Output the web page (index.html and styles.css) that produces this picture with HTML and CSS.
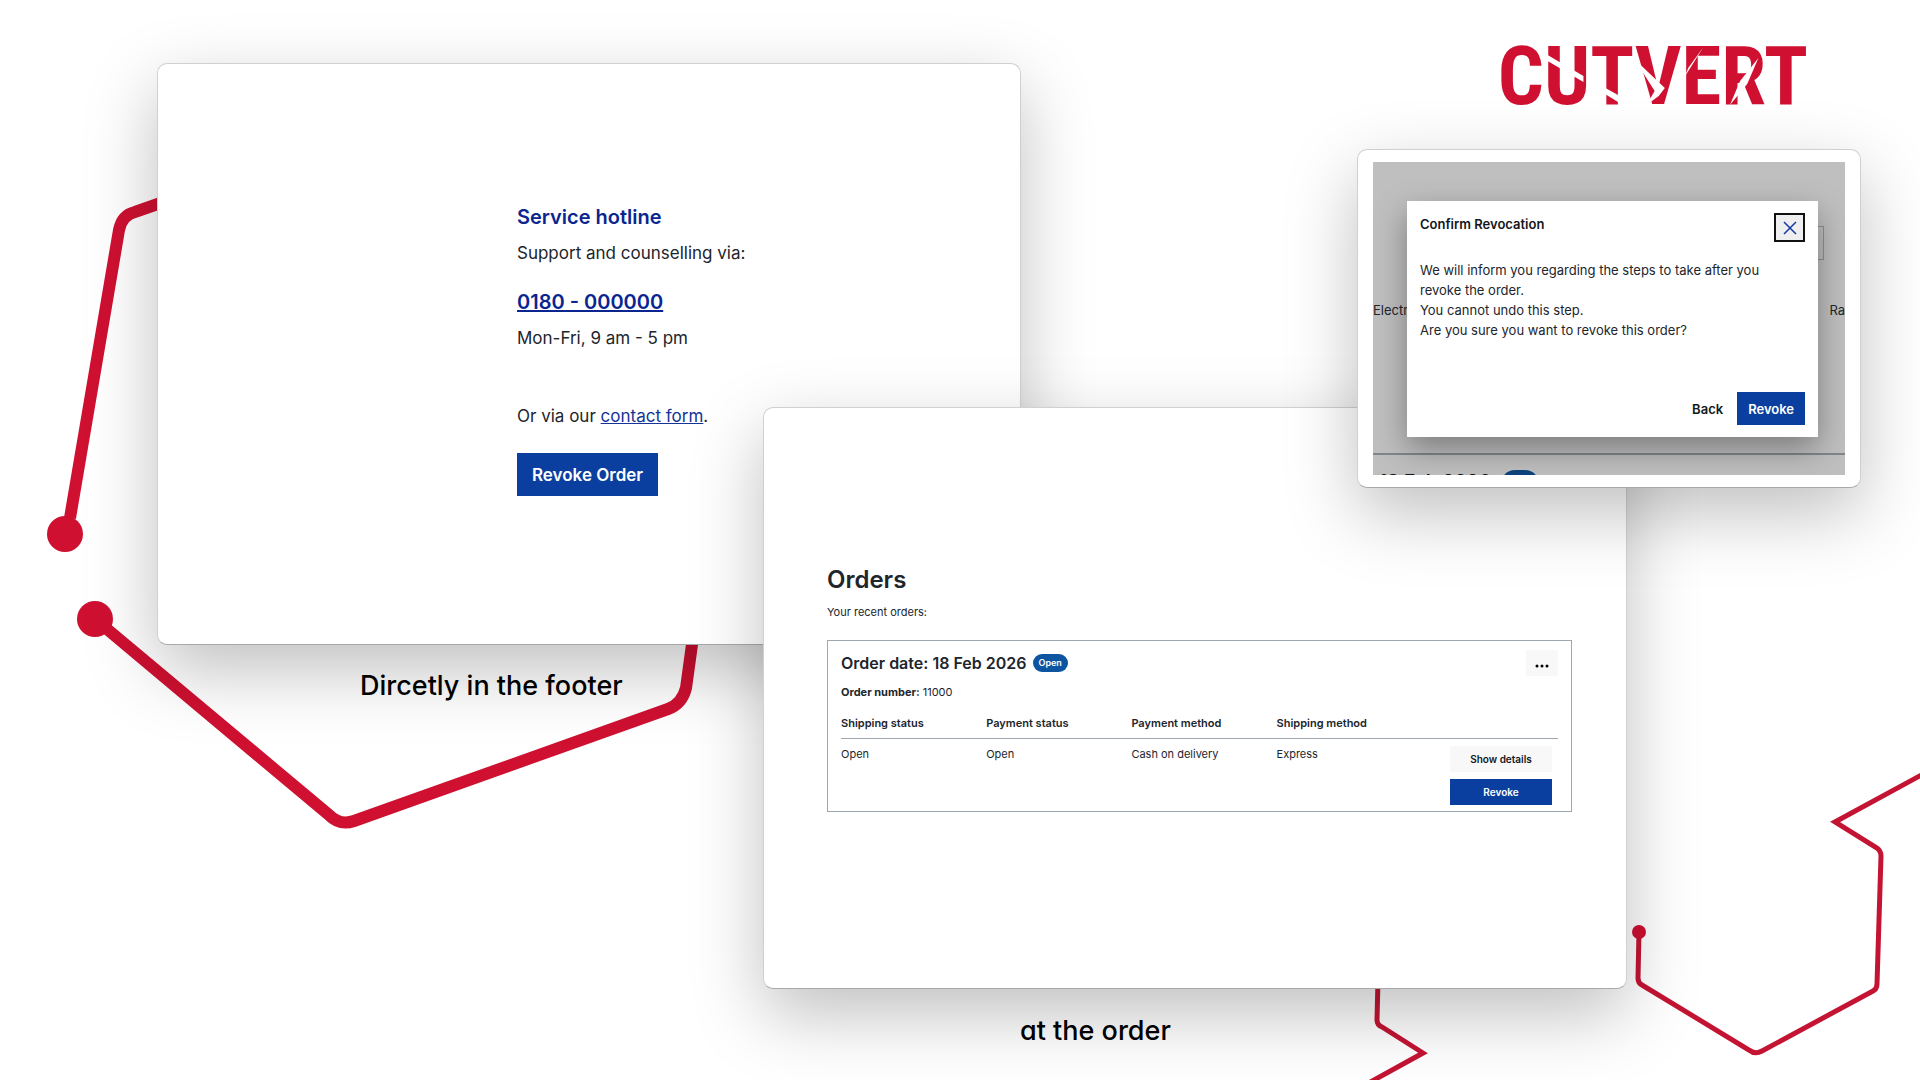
FILE: index.html
```html
<!DOCTYPE html>
<html lang="en">

<head>
    <meta charset="UTF-8">
    <meta name="viewport" content="width=device-width, initial-scale=1.0">
    <title>Cutvert - Revoke Order</title>
    <link rel="stylesheet" href="styles.css">
</head>

<body>
    <main class="stage">
        <svg class="lines" viewBox="0 0 1920 1080" preserveAspectRatio="xMinYMin slice" aria-hidden="true">
            <g class="line-thick">
                <path d="M70 518 L119 230 Q122 215 135 212 L175 198" />
                <path d="M95 619 L329 815 Q340 826 354 821 L668 709 Q682 704 686 688 L694 630" />
            </g>
            <g class="line-thin">
                <path d="M1639 932 L1638 978 Q1638 983 1642 985 L1749 1050 Q1755 1055 1762 1051 L1873 991 Q1877 989 1877 984 L1881 856 Q1881 851 1877 848 L1835 822 L1925 773" />
                <path d="M1378 980 L1377 1020 Q1377 1025 1382 1027 L1423 1053 L1365 1085" />
            </g>
            <g class="dots">
                <circle cx="65" cy="534" r="18" />
                <circle cx="95" cy="619" r="18" />
                <circle cx="1639" cy="932" r="7" />
            </g>
        </svg>

        <div class="logo">
            <span>CUTVERT</span>
            <svg class="logo-cuts" viewBox="0 0 305 68" preserveAspectRatio="none" aria-hidden="true">
                <path d="M42 8 L84 33 V39 L42 14Z" />
                <path d="M102 43 L118 52 V59 L102 49Z" />
                <path d="M134 16 L164 45 L158 53 L146 62 L154 48Z" />
                <path d="M202 4 L184 33 L187 25Z" />
                <path d="M256 15 L245 41 L228 62 L238 38Z" />
            </svg>
        </div>

        <section class="panel footer-panel">
            <h2>Service hotline</h2>
            <p>Support and counselling via:</p>
            <a class="phone" href="tel:0180000000">0180 - 000000</a>
            <p>Mon-Fri, 9 am - 5 pm</p>
            <p class="contact">Or via our <a href="#contact">contact form</a>.</p>
            <button type="button" class="btn btn-large">Revoke Order</button>
        </section>
        <p class="caption caption-footer">Dircetly in the footer</p>

        <section class="panel orders-panel">
            <h1>Orders</h1>
            <p>Your recent orders:</p>
            <article class="order">
                <div class="order-header">
                    <h2>Order date: 18 Feb 2026</h2>
                    <span class="badge">Open</span>
                    <button type="button" class="more-btn" aria-label="More">
                        <svg width="14" height="4" viewBox="0 0 14 4">
                            <circle cx="2" cy="2" r="1.5" />
                            <circle cx="7" cy="2" r="1.5" />
                            <circle cx="12" cy="2" r="1.5" />
                        </svg>
                    </button>
                </div>
                <p class="order-number"><strong>Order number:</strong> 11000</p>
                <table>
                    <thead>
                        <tr>
                            <th>Shipping status</th>
                            <th>Payment status</th>
                            <th>Payment method</th>
                            <th>Shipping method</th>
                            <th class="col-actions"></th>
                        </tr>
                    </thead>
                    <tbody>
                        <tr>
                            <td>Open</td>
                            <td>Open</td>
                            <td>Cash on delivery</td>
                            <td>Express</td>
                            <td>
                                <div class="order-actions">
                                    <button type="button" class="btn btn-small btn-light">Show details</button>
                                    <button type="button" class="btn btn-small">Revoke</button>
                                </div>
                            </td>
                        </tr>
                    </tbody>
                </table>
            </article>
        </section>
        <p class="caption caption-order">at the order</p>

        <section class="panel modal-panel">
            <div class="shop">
                <div class="shop-page">
                    <div class="shop-search"></div>
                    <div class="shop-nav"><span>Electr</span><span>Ra</span></div>
                    <div class="shop-order"><span>18 Feb 2026</span><span class="shop-badge"></span></div>
                </div>
                <div class="modal" role="dialog" aria-labelledby="modalTitle">
                    <div class="modal-header">
                        <h2 id="modalTitle">Confirm Revocation</h2>
                        <button type="button" class="close-btn" aria-label="Close">
                            <svg width="14" height="14" viewBox="0 0 14 14">
                                <path d="M1 1 L13 13 M13 1 L1 13" />
                            </svg>
                        </button>
                    </div>
                    <p class="modal-text">We will inform you regarding the steps to take after you revoke the order.<br>
                        You cannot undo this step.<br>
                        Are you sure you want to revoke this order?</p>
                    <div class="modal-footer">
                        <button type="button" class="back-btn">Back</button>
                        <button type="button" class="btn btn-medium">Revoke</button>
                    </div>
                </div>
            </div>
        </section>
    </main>
</body>

</html>
```
FILE: styles.css
```css
* {
    box-sizing: border-box;
}

body {
    margin: 0;
    font-family: Inter, "Liberation Sans", sans-serif;
    color: #21252c;
    background-color: #fff;
}

h1,
h2,
p {
    margin: 0;
}

button {
    font-family: inherit;
    cursor: pointer;
}

.stage {
    position: relative;
    min-height: 100vh;
    overflow: hidden;
}

.lines {
    position: absolute;
    left: 0;
    top: 0;
    width: 100%;
    height: 100%;
}

.line-thick,
.line-thin {
    fill: none;
    stroke: #cf1031;
    stroke-width: 12;
}

.line-thin {
    stroke: #c41433;
    stroke-width: 5;
}

.dots {
    fill: #cf1031;
}

/* logo */
.logo {
    position: absolute;
    right: 112px;
    top: 43px;
    color: #cf1031;
    font-family: "Liberation Sans Narrow", "Roboto Condensed", "DejaVu Sans Condensed", sans-serif;
    font-size: 81px;
    font-weight: bold;
    line-height: 68px;
}

.logo-cuts {
    position: absolute;
    left: 0;
    top: 0;
    width: 100%;
    height: 100%;
    fill: #fff;
}

/* floating windows */
.panel {
    position: absolute;
    background-color: #fff;
    border: 1px solid #d0d0d0;
    border-bottom-color: #a8a8a8;
    border-radius: 10px;
    box-shadow: 0 25px 70px rgba(0, 0, 0, 0.25);
}

.caption {
    position: absolute;
    color: #000;
    font-size: 27px;
    font-weight: 500;
    line-height: 36px;
    font-feature-settings: "cv11";
}

.caption-footer {
    left: 360px;
    top: 668px;
}

.caption-order {
    left: 1020px;
    top: 1013px;
}

.btn {
    border: none;
    background-color: #0a3fa0;
    color: #fff;
    font-weight: 600;
}

.btn-large {
    height: 43px;
    padding: 0 15px;
    font-size: 17px;
}

.btn-medium {
    height: 33px;
    padding: 0 11px;
    font-size: 13px;
}

.btn-small {
    height: 26px;
    font-size: 10px;
}

.btn-light {
    background-color: #f8f8f8;
    color: #14171c;
}

/* footer window */
.footer-panel {
    left: 157px;
    top: 63px;
    width: 45%;
    padding: 135px 40px 148px 359px;
    font-size: 17px;
    line-height: 36px;
}

.footer-panel h2,
.phone {
    display: block;
    color: #0a2590;
    font-size: 20px;
    font-weight: 600;
    line-height: 36px;
}

.phone {
    margin-top: 13px;
}

.contact {
    margin: 42px 0 19px;
}

.contact a {
    color: #143498;
}

/* orders window */
.orders-panel {
    left: 763px;
    top: 407px;
    width: 45%;
    padding: 156px 54px 176px 63px;
    font-size: 11px;
    line-height: 20px;
}

.orders-panel h1 {
    font-size: 24px;
    font-weight: 600;
    line-height: 32px;
    margin-bottom: 6px;
}

.order {
    margin-top: 18px;
    padding: 9px 13px 6px;
    border: 1px solid #9ea6b0;
}

.order-header {
    display: flex;
    align-items: center;
}

.order-header h2 {
    font-size: 16px;
    font-weight: 600;
    line-height: 20px;
}

.badge {
    margin-left: 6px;
    padding: 0 6px;
    border-radius: 10px;
    background-color: #0d55a0;
    color: #fff;
    font-size: 9px;
    font-weight: 600;
    line-height: 18px;
}

.more-btn {
    width: 32px;
    height: 26px;
    margin-left: auto;
    padding: 0;
    border: none;
    background-color: #f8f8f8;
}

.order-number {
    margin: 6px 0 11px;
}

.order table {
    width: 100%;
    table-layout: fixed;
    border-collapse: collapse;
}

.order th {
    padding: 0 0 5px;
    border-bottom: 1px solid #9ea6b0;
    font-weight: 600;
    text-align: left;
}

.order .col-actions {
    width: 19%;
}

.order td {
    padding: 5px 0 0;
    vertical-align: top;
}

.order-actions {
    display: flex;
    flex-direction: column;
    gap: 7px;
    width: 102px;
    margin: 2px 6px 0 auto;
}

/* confirm window */
.modal-panel {
    right: 59px;
    top: 149px;
    width: 504px;
    padding: 12px 15px;
}

.shop {
    position: relative;
    overflow: hidden;
    padding: 39px 27px 38px 34px;
    background-color: #bfbfbf;
    font-size: 13px;
    line-height: 20px;
}

.shop-page {
    position: absolute;
    inset: 0;
    padding-top: 64px;
}

.shop-search {
    height: 34px;
    margin: 0 21px 0 60px;
    border: 1px solid #8d9296;
}

.shop-nav {
    display: flex;
    justify-content: space-between;
    margin: 40px 0 133px;
}

.shop-order {
    display: flex;
    align-items: flex-start;
    padding: 15px 6px;
    border-top: 2px solid #808689;
    color: #14171c;
    font-size: 19px;
    font-weight: 600;
    line-height: 24px;
}

.shop-badge {
    width: 38px;
    height: 28px;
    margin-left: 10px;
    border-radius: 14px;
    background-color: #0d437c;
}

.modal {
    position: relative;
    padding: 12px 13px;
    background-color: #fff;
    box-shadow: 0 12px 30px rgba(0, 0, 0, 0.35);
}

.modal-header {
    display: flex;
    justify-content: space-between;
    margin-bottom: 18px;
}

.modal-header h2 {
    color: #14171c;
    font-size: 13px;
    font-weight: 600;
    line-height: 22px;
}

.close-btn {
    display: flex;
    align-items: center;
    justify-content: center;
    width: 31px;
    height: 29px;
    padding: 0;
    border: 2px solid #111;
    background-color: #efefef;
}

.close-btn path {
    stroke: #1738a8;
    stroke-width: 1.5;
}

.modal-text {
    padding-right: 30px;
}

.modal-footer {
    display: flex;
    justify-content: flex-end;
    gap: 14px;
    margin-top: 52px;
}

.back-btn {
    padding: 0;
    border: none;
    background: none;
    color: #14171c;
    font-size: 13px;
    font-weight: 600;
}
```
